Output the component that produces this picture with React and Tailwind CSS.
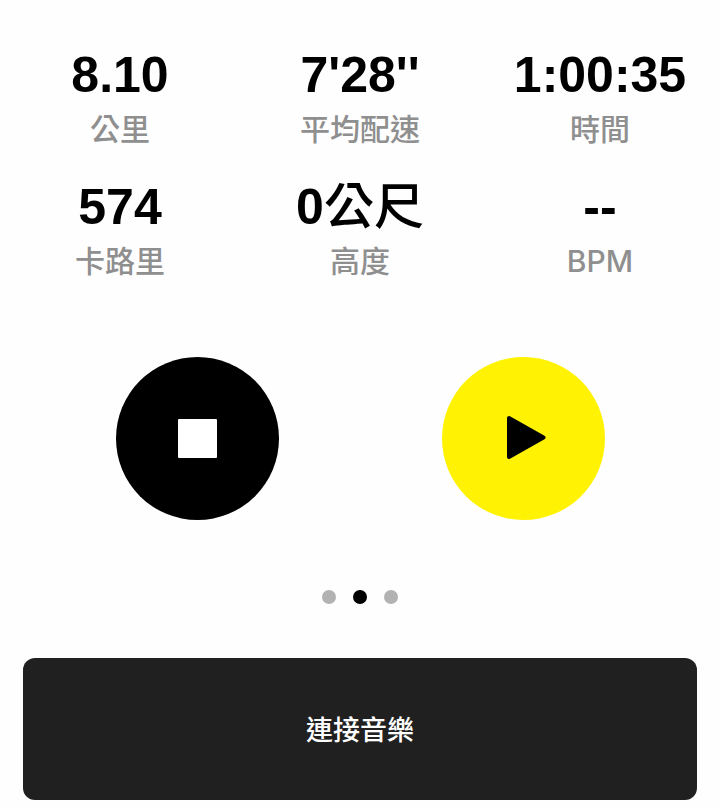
import React, { useState } from 'react';

const stats = [
    { value: '8.10', label: '公里' },
    { value: "7'28''", label: '平均配速' },
    { value: '1:00:35', label: '時間' },
    { value: '574', label: '卡路里' },
    { value: '0', unit: '公尺', label: '高度' },
    { value: '--', label: 'BPM' },
];

const pages = ['地圖', '數據', '音樂'];

const Stat = ({ value, unit, label }) => (
    <div className="flex flex-col items-center">
        <dt className="order-2 font-['Inter','Noto_Sans_CJK_TC',sans-serif] text-[30px] leading-[44px] font-medium text-[#8f8f8f] whitespace-nowrap">
            {label}
        </dt>
        <dd className="order-1 text-[50px] leading-[64px] font-bold text-black whitespace-nowrap">
            {value}
            {unit && <span className="font-medium">{unit}</span>}
        </dd>
    </div>
);

const App = () => {
    const [page, setPage] = useState(1);

    return (
        <main className="bg-[#fefefe] pt-[43px] pb-2 font-['Liberation_Sans','Noto_Sans_CJK_TC',sans-serif]">
            <dl className="grid grid-cols-3 gap-y-6">
                {stats.map((stat) => (
                    <Stat key={stat.label} {...stat} />
                ))}
            </dl>

            <div className="mt-[74px] flex justify-center gap-[163px]">
                <button type="button" aria-label="停止" className="flex size-[163px] items-center justify-center rounded-full bg-black">
                    <span className="size-[39px] rounded-[1px] bg-white"></span>
                </button>
                <button type="button" aria-label="繼續" className="flex size-[163px] items-center justify-center rounded-full bg-[#fff203]">
                    <svg className="size-12" viewBox="0 0 48 48" aria-hidden="true">
                        <path
                            d="M10 3L44.5 22.500L10 42Z"
                            fill="black"
                            stroke="black"
                            strokeWidth={4}
                            strokeLinejoin="round"
                        />
                    </svg>
                </button>
            </div>

            <div className="mt-[70px] flex justify-center gap-[17px]">
                {pages.map((name, index) => (
                    <button
                        key={name}
                        type="button"
                        aria-label={name}
                        onClick={() => setPage(index)}
                        className={`size-[14px] rounded-full ${index === page ? 'bg-black' : 'bg-[#b2b2b2]'}`}
                    ></button>
                ))}
            </div>

            <div className="mt-[54px] px-[23px]">
                <button
                    type="button"
                    className="h-[142px] w-full rounded-xl bg-[#202020] font-['Noto_Sans_CJK_TC',sans-serif] text-[27px] font-medium text-white"
                >
                    連接音樂
                </button>
            </div>
        </main>
    );
};

export default App;
